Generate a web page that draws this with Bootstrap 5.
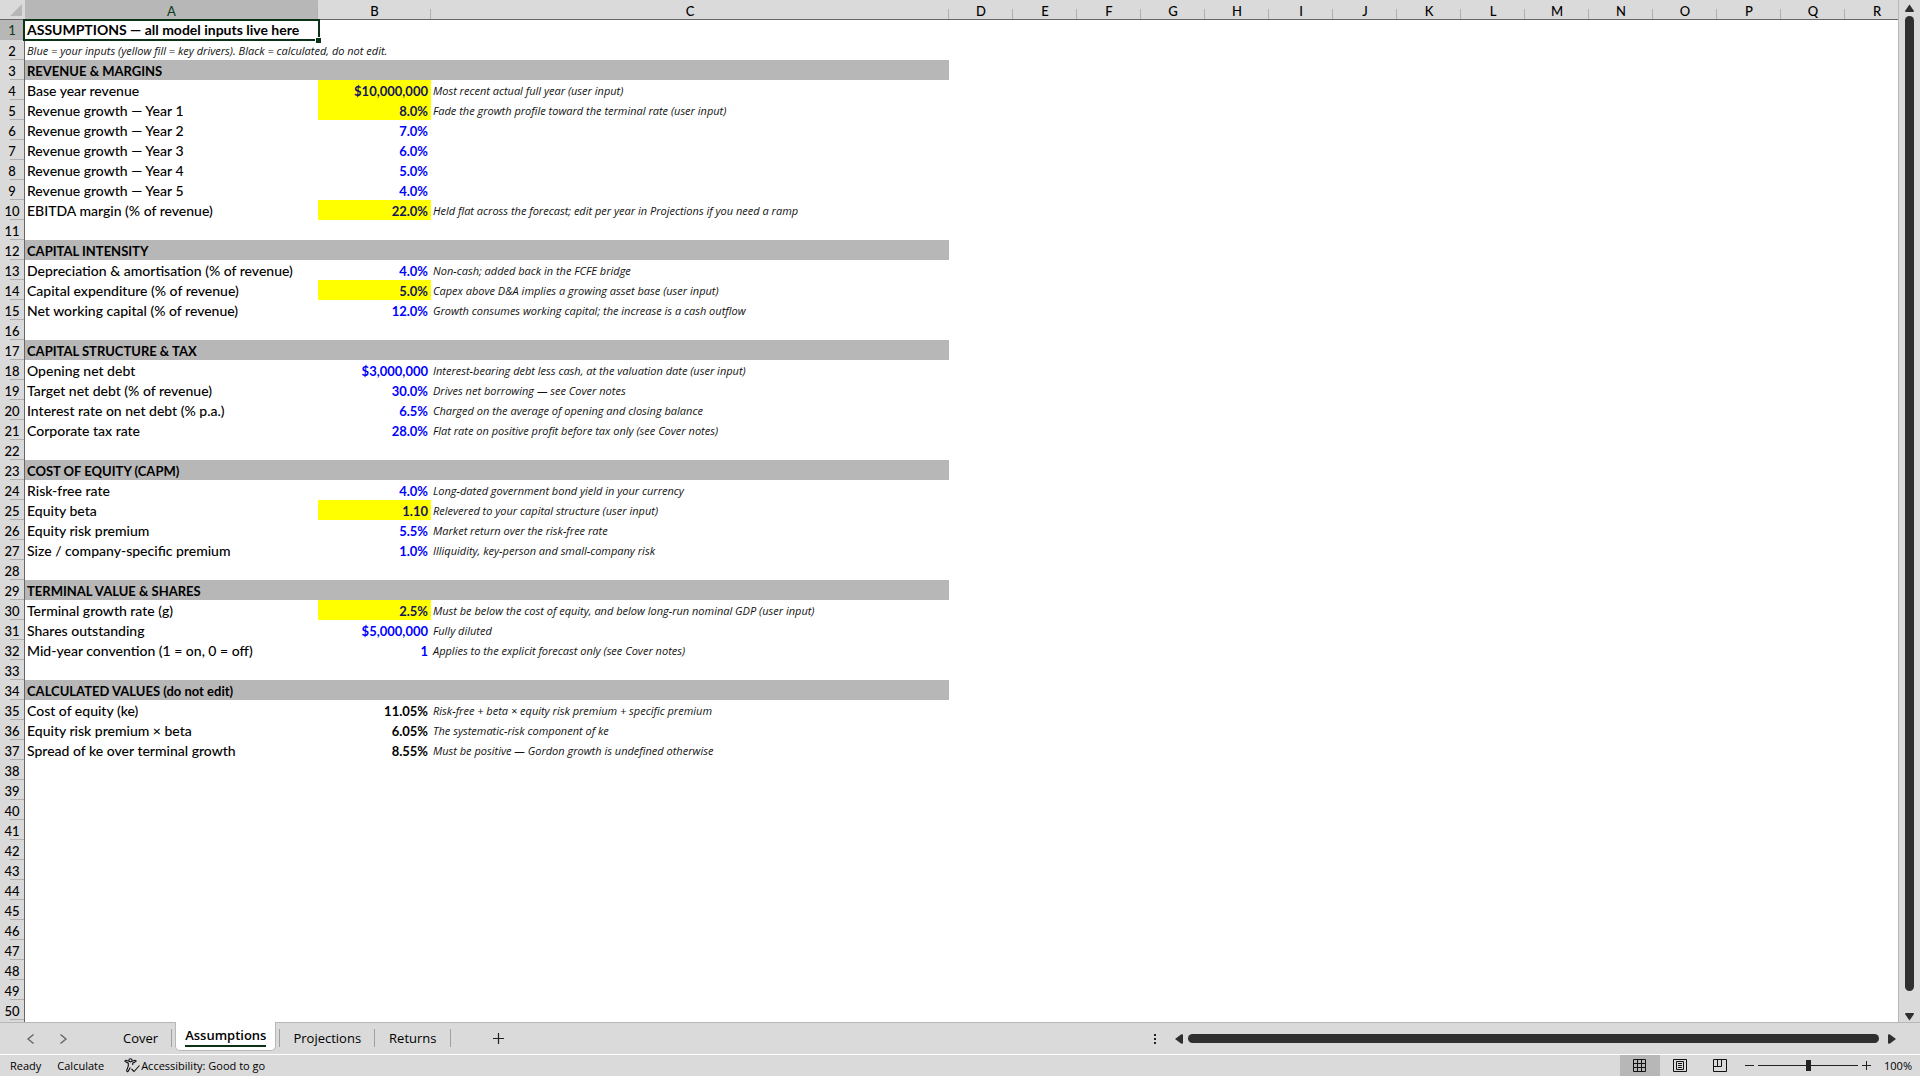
<!DOCTYPE html>
<html lang="en">
<head>
<meta charset="utf-8">
<meta name="viewport" content="width=device-width, initial-scale=1">
<title>Assumptions</title>
<link rel="stylesheet" href="https://cdn.jsdelivr.net/npm/bootstrap@5.3.0/dist/css/bootstrap.min.css">
<style>
:root { --chrome: #dadada; --chrome-dark: #b7b7b7; --ink: #2f2f2f; --pick: #0b3318; }
body { background: var(--chrome); color: #000; font-family: "Open Sans", "Noto Sans", sans-serif; font-size: 12px; line-height: 16px; }
button { color: inherit; }
.grid-pane { background: #fff; min-width: 0; border-right: 1px solid var(--chrome-dark); }
.sheet { table-layout: fixed; width: 1909px; border-collapse: separate; border-spacing: 0; font-family: Lato, "Open Sans", sans-serif; font-size: 13px; line-height: 18px; font-weight: 500; }
.sheet th, .sheet td { padding: 2px 2px 0; height: 20px; white-space: nowrap; position: relative; }
.sheet thead th { background: var(--chrome); border-bottom: 1px solid #666; text-align: center; font-weight: 500; line-height: 16px; padding-top: 3px; }
.sheet thead th::after { content: ""; position: absolute; right: 0; bottom: 0; width: 1px; height: 10px; background: #b0b0b0; }
.sheet tbody th { background: var(--chrome); border-right: 1px solid #666; text-align: center; font-weight: 500; padding: 2px 0 0; }
.sheet tbody th::after { content: ""; position: absolute; right: 0; bottom: 0; width: 14px; height: 1px; background: #b0b0b0; }
.sheet tbody tr:first-child > * { line-height: 16px; vertical-align: top; }
.sheet .picked { background: var(--chrome-dark) !important; color: #143d20; }
.sheet .corner::after { width: 12px; height: 12px; right: 3px; bottom: 3px; background: var(--chrome-dark); clip-path: polygon(100% 0, 100% 100%, 0 100%); }
.sheet .title-cell, .sheet .band { font-weight: 700; }
.sheet .title-cell, .sheet .entry { font-size: 14px; }
.sheet .band { background: var(--chrome-dark); }
.sheet .val { font-weight: 700; text-align: right; color: #00f; padding-right: 3px; }
.sheet .key-driver { background: #ff0; color: #14145a; }
.sheet .calc { color: #000; }
.sheet .remark { font-family: "Open Sans", "Noto Sans", sans-serif; font-style: italic; font-size: 11px; color: #111; }
.sheet .selection::before { content: ""; position: absolute; inset: -1px -2px -1px -2px; border: 2px solid var(--pick); z-index: 1; }
.sheet .selection::after { content: ""; position: absolute; right: -3px; bottom: -3px; width: 6px; height: 6px; background: var(--pick); border: solid #fff; border-width: 1px 0 0 1px; z-index: 2; }
.v-scroll { width: 21px; padding: 4px 6px 1px; }
.thumb { background: var(--ink); border-radius: 5px; }
.v-scroll .thumb { width: 9px; margin: 4px 0 22px; }
.h-scroll .thumb { height: 9px; }
.plain { border: 0; background: none; padding: 0; line-height: 0; }
.tab-bar { height: 32px; border-top: 1px solid var(--chrome-dark); padding-right: 24px; }
.tabs-wrap { padding-left: 24px; }
.nav-arrows { gap: 18px; width: 85px; }
.sheet-tab { border: 0; background: none; font-size: 13px; line-height: 20px; padding: 5px 14px 6px; height: 31px; position: relative; }
.sheet-tab:not(.current)::after, .sheet-tab.current + .sheet-tab::before { content: ""; position: absolute; right: 0; top: 6px; height: 18px; width: 1px; background: #a0a0a0; }
.sheet-tab.current + .sheet-tab::before { right: auto; left: 0; }
.sheet-tab.current { background: #fff; font-weight: 600; height: 29px; margin: -1px 3px 0; padding: 3px 9px; border: 1px solid var(--chrome-dark); border-top: 0; border-radius: 0 0 5px 5px; }
.sheet-tab.current span { display: block; border-bottom: 2px solid var(--pick); line-height: 20px; }
.new-tab { margin-left: 41px; }
.h-scroll { width: 742px; gap: 5px; }
.status-bar { height: 22px; border-top: 1px solid #fff; font-size: 11px; font-weight: 500; padding: 0 8px 0 10px; }
.view-btn { width: 40px; height: 21px; }
.view-btn.on { background: var(--chrome-dark); }
.zoom-range { appearance: none; width: 100px; height: 12px; margin: 0 3px; background: linear-gradient(#222, #222) center / 100% 1px no-repeat; }
.zoom-range::-webkit-slider-thumb { appearance: none; width: 5px; height: 11px; background: #222; }
</style>
</head>
<body class="vh-100 d-flex flex-column overflow-hidden">
<main class="d-flex flex-grow-1 overflow-hidden">
  <div class="grid-pane flex-grow-1 overflow-hidden">
    <table class="sheet">
      <colgroup id="cols"></colgroup>
      <thead><tr id="heads"></tr></thead>
      <tbody id="cells"></tbody>
    </table>
  </div>
  <div class="v-scroll d-flex flex-column align-items-center">
    <button class="plain" aria-label="Scroll up"><svg width="9" height="8"><path d="M4.5 0.5 9 7Q9 8 8 8H1Q0 8 0 7Z" fill="#2f2f2f"/></svg></button>
    <div class="thumb flex-grow-1"></div>
    <button class="plain" aria-label="Scroll down"><svg width="9" height="8"><path d="M4.5 7.5 9 1Q9 0 8 0H1Q0 0 0 1Z" fill="#2f2f2f"/></svg></button>
  </div>
</main>
<nav class="tab-bar d-flex justify-content-between" aria-label="Sheets">
  <div class="tabs-wrap d-flex align-items-start">
    <div class="nav-arrows d-flex align-self-center">
      <button class="plain" aria-label="Previous sheet"><svg width="14" height="12" fill="none" stroke="#666" stroke-width="1.4"><path d="M9.500 1.500 4 6l5.500 4.500"/></svg></button>
      <button class="plain" aria-label="Next sheet"><svg width="14" height="12" fill="none" stroke="#666" stroke-width="1.4"><path d="M4.500 1.500 10 6l-5.500 4.500"/></svg></button>
    </div>
    <button class="sheet-tab">Cover</button>
    <button class="sheet-tab current"><span>Assumptions</span></button>
    <button class="sheet-tab">Projections</button>
    <button class="sheet-tab">Returns</button>
    <button class="plain align-self-center new-tab" aria-label="New sheet"><svg width="13" height="13" stroke="#222" stroke-width="1.2"><path d="M6.500 1v11M1 6.500h11"/></svg></button>
  </div>
  <div class="h-scroll d-flex align-items-center">
    <svg width="16" height="12" fill="#222"><path d="M0 1h2v2H0zM0 5h2v2H0zM0 9h2v2H0z"/></svg>
    <button class="plain" aria-label="Scroll left"><svg width="8" height="10"><path d="M0 5 6 .5Q8 0 8 1V9Q8 10 6 9.500Z" fill="#2f2f2f"/></svg></button>
    <div class="thumb flex-grow-1"></div>
    <button class="plain ms-1" aria-label="Scroll right"><svg width="8" height="10"><path d="M8 5 2 .5Q0 0 0 1V9Q0 10 2 9.500Z" fill="#2f2f2f"/></svg></button>
  </div>
</nav>
<footer class="status-bar d-flex justify-content-between align-items-center">
  <div class="d-flex align-items-center gap-3">
    <span>Ready</span><span>Calculate</span>
    <span class="d-flex align-items-center"><svg class="ms-1" width="17" height="15" viewBox="0 0 17 15" fill="none" stroke="#111" stroke-width="1.100"><circle cx="6.500" cy="2.300" r="1.600"/><path d="M4.800 3.300 2 2.200Q.8 2.200 1 3.500L4.300 5.200V8L2.600 12.500Q2.800 14 4 13.500L6.300 9.500M8.200 3.300 11 2.200Q12.200 2.200 12 3.500L8.700 5.200V7"/><path d="m7.500 11 2.500 2.500 5.500-6"/></svg>Accessibility: Good to go</span>
  </div>
  <div class="d-flex align-items-center">
    <button class="plain view-btn on" aria-label="Normal view"><svg width="14" height="14" fill="none" stroke="#111"><path d="M.5.5h12v12H.5zM4.500.5v12M8.500.5v12M.5 4.500h12M.5 8.500h12"/></svg></button>
    <button class="plain view-btn" aria-label="Page layout"><svg width="14" height="14" fill="none" stroke="#111"><path d="M.5.5h13v12H.5zM3.500 2.500h7v8h-7zM5 4.500h4M5 6.500h4M5 8.500h4"/></svg></button>
    <button class="plain view-btn" aria-label="Page break preview"><svg width="14" height="14" fill="none" stroke="#111"><path d="M.5.5h13v12H.5zM4.500.5v7M8.500.5v7M.5 7.500h8"/></svg></button>
    <button class="plain ms-1" aria-label="Zoom out"><svg width="11" height="11" stroke="#222"><path d="M1 5.500h9"/></svg></button>
    <input class="zoom-range" type="range" min="0" max="100" value="50" aria-label="Zoom">
    <button class="plain" aria-label="Zoom in"><svg width="11" height="11" stroke="#222"><path d="M1 5.500h9M5.500 1v9"/></svg></button>
    <span class="ms-2 ps-1">100%</span>
  </div>
</footer>
<script src="https://cdn.jsdelivr.net/npm/bootstrap@5.3.0/dist/js/bootstrap.bundle.min.js"></script>
<script>
// Row number -> [label, value, note, kind]; kind: k = key driver, c = calculated
const rows = {
  4: ["Base year revenue", "$10,000,000", "Most recent actual full year (user input)", "k"],
  5: ["Revenue growth — Year 1", "8.0%", "Fade the growth profile toward the terminal rate (user input)", "k"],
  6: ["Revenue growth — Year 2", "7.0%"],
  7: ["Revenue growth — Year 3", "6.0%"],
  8: ["Revenue growth — Year 4", "5.0%"],
  9: ["Revenue growth — Year 5", "4.0%"],
  10: ["EBITDA margin (% of revenue)", "22.0%", "Held flat across the forecast; edit per year in Projections if you need a ramp", "k"],
  13: ["Depreciation & amortisation (% of revenue)", "4.0%", "Non-cash; added back in the FCFE bridge"],
  14: ["Capital expenditure (% of revenue)", "5.0%", "Capex above D&A implies a growing asset base (user input)", "k"],
  15: ["Net working capital (% of revenue)", "12.0%", "Growth consumes working capital; the increase is a cash outflow"],
  18: ["Opening net debt", "$3,000,000", "Interest-bearing debt less cash, at the valuation date (user input)"],
  19: ["Target net debt (% of revenue)", "30.0%", "Drives net borrowing — see Cover notes"],
  20: ["Interest rate on net debt (% p.a.)", "6.5%", "Charged on the average of opening and closing balance"],
  21: ["Corporate tax rate", "28.0%", "Flat rate on positive profit before tax only (see Cover notes)"],
  24: ["Risk-free rate", "4.0%", "Long-dated government bond yield in your currency"],
  25: ["Equity beta", "1.10", "Relevered to your capital structure (user input)", "k"],
  26: ["Equity risk premium", "5.5%", "Market return over the risk-free rate"],
  27: ["Size / company-specific premium", "1.0%", "Illiquidity, key-person and small-company risk"],
  30: ["Terminal growth rate (g)", "2.5%", "Must be below the cost of equity, and below long-run nominal GDP (user input)", "k"],
  31: ["Shares outstanding", "$5,000,000", "Fully diluted"],
  32: ["Mid-year convention (1 = on, 0 = off)", "1", "Applies to the explicit forecast only (see Cover notes)"],
  35: ["Cost of equity (ke)", "11.05%", "Risk-free + beta × equity risk premium + specific premium", "c"],
  36: ["Equity risk premium × beta", "6.05%", "The systematic-risk component of ke", "c"],
  37: ["Spread of ke over terminal growth", "8.55%", "Must be positive — Gordon growth is undefined otherwise", "c"]
};
const bands = { 3: "REVENUE & MARGINS", 12: "CAPITAL INTENSITY", 17: "CAPITAL STRUCTURE & TAX", 23: "COST OF EQUITY (CAPM)", 29: "TERMINAL VALUE & SHARES", 34: "CALCULATED VALUES (do not edit)" };
const letters = [..."ABCDEFGHIJKLMNOPQR"];
const widths = [25, 293, 113, 518];
const el = (tag, cls, text) => { const e = document.createElement(tag); if (cls) e.className = cls; if (text) e.textContent = text; return e; };

["", ...letters].forEach((l, i) => {
  const c = el("col"); c.style.width = (widths[i] || 64) + "px";
  document.getElementById("cols").append(c);
  document.getElementById("heads").append(el("th", i === 0 ? "corner" : i === 1 ? "picked" : "", l));
});
// Row 51 is the partly visible row under the fold, without a number
for (let n = 1; n <= 51; n++) {
  const tr = el("tr"), [a, b, c, kind] = rows[n] || [];
  tr.append(el("th", n === 1 ? "picked" : "", n > 50 ? "" : String(n)));
  if (n === 1) tr.append(el("td", "title-cell selection", "ASSUMPTIONS — all model inputs live here"), el("td"), el("td"));
  else if (n === 2) tr.append(el("td", "remark", "Blue = your inputs (yellow fill = key drivers). Black = calculated, do not edit."), el("td"), el("td"));
  else if (bands[n]) tr.append(el("td", "band", bands[n]), el("td", "band"), el("td", "band"));
  else tr.append(el("td", "entry", a), el("td", b ? "val" + (kind === "k" ? " key-driver" : kind === "c" ? " calc" : "") : "", b), el("td", "remark", c));
  for (let k = 3; k < letters.length; k++) tr.append(el("td"));
  document.getElementById("cells").append(tr);
}
</script>
</body>
</html>
